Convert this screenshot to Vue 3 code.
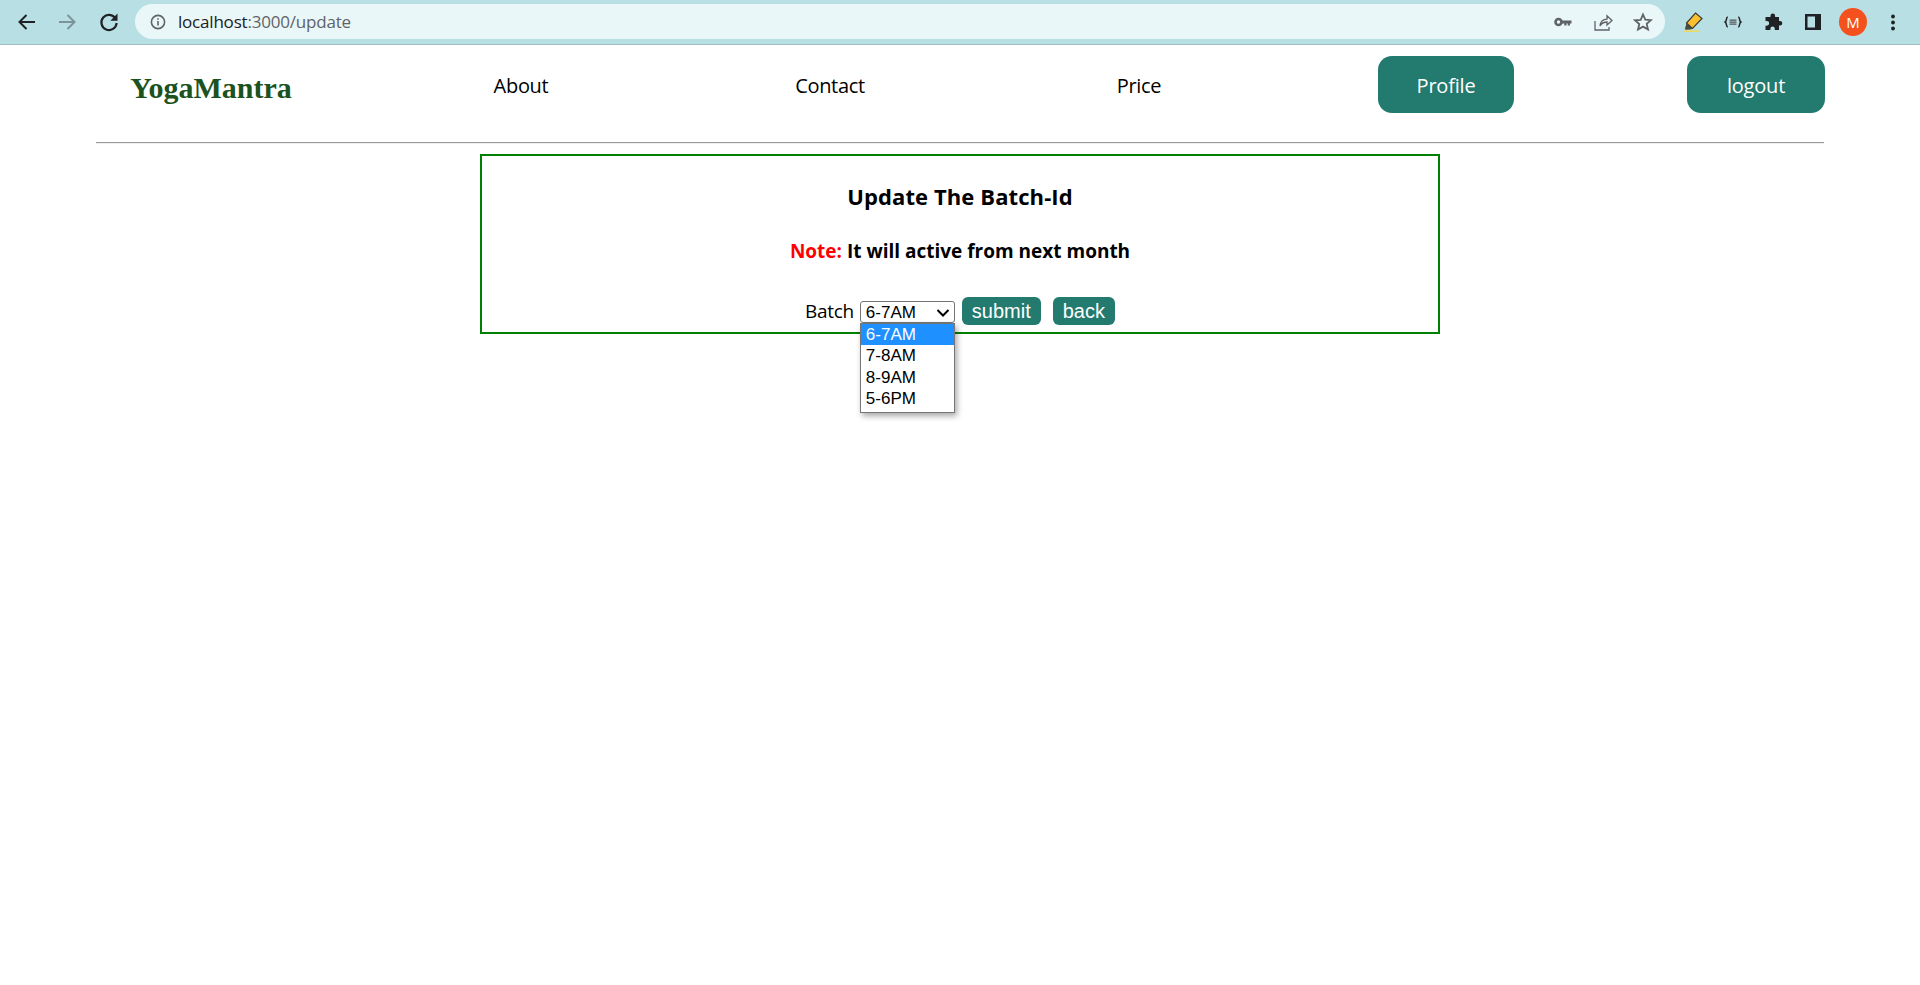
<script setup>
import { ref } from "vue";

const batches = ref(["6-7AM", "7-8AM", "8-9AM", "5-6PM"]);
const selected = ref("6-7AM");
const links = ["About", "Contact", "Price"];
</script>

<template>
  <div class="page">
    <header class="chrome">
      <div class="nav-icons">
        <svg width="24" height="24" viewBox="0 0 24 24"><path d="M20 12H5M11.5 5l-7 7 7 7" fill="none" stroke="#202124" stroke-width="2"/></svg>
        <svg width="24" height="24" viewBox="0 0 24 24"><path d="M4 12h15M12.5 5l7 7-7 7" fill="none" stroke="#7c9397" stroke-width="2"/></svg>
        <svg class="reload" width="24" height="24" viewBox="0 0 24 24"><path d="M18.5 8.500A7.600 7.600 0 1 0 19.600 13" fill="none" stroke="#202124" stroke-width="2.200"/><path d="M20.500 3.500v7.200h-7.200z" fill="#202124"/></svg>
      </div>
      <div class="omnibox">
        <svg class="info" width="16" height="16" viewBox="0 0 16 16"><circle cx="8" cy="8" r="6.600" fill="none" stroke="#5f6368" stroke-width="1.600"/><path d="M7.200 7h1.600v4.600H7.200zM7.200 4.200h1.600v1.600H7.200z" fill="#5f6368"/></svg>
        <span class="url">localhost<span class="url-dim">:3000/update</span></span>
        <div class="omni-right">
          <svg width="20" height="20" viewBox="0 0 20 20"><circle cx="5.500" cy="10" r="3" fill="none" stroke="#5f6368" stroke-width="2.600"/><path d="M8 8.400h10.500v3h-1.600v2h-2.200v-2h-1.200v2h-2.200v-2H8z" fill="#5f6368"/></svg>
          <svg width="20" height="20" viewBox="0 0 20 20"><path d="M2 9v9h14v-3M7 14c.4-4.400 3.500-6.600 7-6.800V3.800L19 8.500l-5 4.600V10c-3 0-5.400 1.200-7 4z" fill="none" stroke="#5f6368" stroke-width="1.300"/></svg>
          <svg width="20" height="20" viewBox="0 0 20 20"><path d="M10 2.500l2.300 5.200 5.600.5-4.200 3.700 1.300 5.500L10 14.600l-5 2.900 1.300-5.500-4.200-3.700 5.600-.5z" fill="none" stroke="#5f6368" stroke-width="1.800"/></svg>
        </div>
      </div>
      <div class="ext-icons">
        <svg width="20" height="20" viewBox="0 0 20 20">
          <path d="M12.500 1L19 6.500 9.500 16.500 3.500 11z" fill="#fbc02d" stroke="#3c3c3c" stroke-width="1.200"/>
          <path d="M3.500 11l6 5.500-2 1-5 .2-.5-1z" fill="#4a4a3a"/>
          <path d="M0 19.200h17" stroke="#f3d94e" stroke-width="1.400"/>
        </svg>
        <svg width="20" height="20" viewBox="0 0 20 20"><path d="M4.800 5C2.800 5 4 9 2.200 10c1.800 1 .6 5 2.600 5M15.200 5c2 0 .8 4 2.600 5-1.800 1-.6 5-2.600 5" fill="none" stroke="#202124" stroke-width="1.500"/><path d="M6.500 7.400h7v1.400h-7zM6.500 9.400h7v1.400h-7zM6.500 11.400h7v1.400h-7z" fill="#555"/></svg>
        <svg width="20" height="20" viewBox="0 0 20 20"><path d="M7.500 3.800a2.300 2.300 0 0 1 4.600 0V5H16v3.900h1a2.300 2.300 0 0 1 0 4.600h-1V18h-4.200v-1.200a2.200 2.200 0 0 0-4.400 0V18H2.500v-4.300h1.300a2.400 2.400 0 0 0 0-4.800H2.500V5h5z" fill="#202124"/></svg>
        <svg width="20" height="20" viewBox="0 0 20 20"><path d="M2 2h16v16H2z" fill="#202124"/><path d="M4.500 4.500h7.500v11H4.500z" fill="#b8e0e4"/></svg>
        <span class="avatar">M</span>
        <svg width="20" height="20" viewBox="0 0 20 20"><circle cx="10" cy="4.500" r="1.900" fill="#202124"/><circle cx="10" cy="10.500" r="1.900" fill="#202124"/><circle cx="10" cy="16.500" r="1.900" fill="#202124"/></svg>
      </div>
    </header>

    <nav class="navbar">
      <div class="brand">YogaMantra</div>
      <a v-for="link in links" :key="link" class="nav-link">{{ link }}</a>
      <button class="nav-btn profile">Profile</button>
      <button class="nav-btn logout">logout</button>
    </nav>
    <hr class="rule" />

    <main class="card">
      <h2 class="title">Update The Batch-Id</h2>
      <p class="note"><span class="note-label">Note:</span> It will active from next month</p>
      <form class="batch-form" @submit.prevent>
        <label class="batch-label">Batch</label>
        <div class="select-wrap">
          <select v-model="selected" class="batch-select">
            <option v-for="b in batches" :key="b">{{ b }}</option>
          </select>
          <svg class="chevron" width="14" height="8" viewBox="0 0 14 8"><path d="M1.500 1l5.500 5.500L12.500 1" fill="none" stroke="#000" stroke-width="2"/></svg>
          <ul class="dropdown">
            <li v-for="(b, i) in batches" :key="b" :class="{ active: i === 0 }">{{ b }}</li>
          </ul>
        </div>
        <button class="small-btn">submit</button>
        <button class="small-btn">back</button>
      </form>
    </main>
  </div>
</template>

<style>
body {
  background: #fff;
}
</style>

<style scoped>
.page {
  height: 985px;
  overflow: hidden;
  font-family: "Open Sans", sans-serif;
  color: #000;
}
.chrome {
  height: 44px;
  box-sizing: content-box;
  border-bottom: 1px solid #9cbfc4;
  background: #b8e0e4;
  display: flex;
  align-items: center;
}
.nav-icons {
  display: flex;
  gap: 16px;
  margin-left: 15px;
  width: 120px;
}
.reload {
  margin-left: 2px;
}
.omnibox {
  width: 1530px;
  height: 35px;
  margin-top: -1px;
  border-radius: 18px;
  background: #eaf7f8;
  display: flex;
  align-items: center;
  padding-left: 15px;
  box-sizing: border-box;
}
.info {
  margin-right: 12px;
}
.url {
  font-size: 17px;
  color: #202124;
  letter-spacing: -0.2px;
}
.url-dim {
  color: #5f6368;
}
.omni-right {
  margin-left: auto;
  display: flex;
  gap: 20px;
  padding-right: 12px;
}
.ext-icons {
  display: flex;
  align-items: center;
  gap: 20px;
  margin-left: 18px;
}
.avatar {
  width: 28px;
  height: 28px;
  margin: 0 -4px;
  border-radius: 50%;
  background: #f4511e;
  color: #fff;
  font-size: 15px;
  display: flex;
  align-items: center;
  justify-content: center;
}
.navbar {
  width: 1729px;
  height: 97px;
  margin-left: 96px;
  padding-left: 46px;
  box-sizing: border-box;
  display: grid;
  grid-template-columns: repeat(6, 138px);
  justify-content: space-between;
  justify-items: center;
  align-items: start;
}
.brand {
  margin-top: 26px;
  font-family: "Liberation Serif", serif;
  font-weight: 700;
  font-size: 30px;
  line-height: 34px;
  color: #1b5220;
  white-space: nowrap;
}
.nav-link {
  margin-top: 27px;
  padding-left: 2px;
  font-size: 20px;
  line-height: 28px;
  letter-spacing: -0.3px;
  color: #000;
}
.nav-btn {
  margin-top: 11px;
  height: 57px;
  padding: 2px 0 0;
  border: 0;
  border-radius: 14px;
  background: #237a6e;
  color: #fff;
  font-family: "Open Sans", sans-serif;
  font-size: 20px;
  letter-spacing: -0.2px;
}
.profile {
  width: 136px;
  margin-right: 2px;
}
.logout {
  width: 138px;
}
.rule {
  width: 1728px;
  height: 0;
  margin: 0 0 0 96px;
  border: 0;
  border-top: 1px solid #9a9a9a;
  border-bottom: 1px solid #eeeeee;
}
.card {
  width: 960px;
  height: 180px;
  margin: 10px 0 0 480px;
  box-sizing: border-box;
  border: 2px solid #008000;
  display: flex;
  flex-direction: column;
  align-items: center;
}
.title {
  margin: 25px 0 0;
  font-size: 22px;
  line-height: 30px;
  letter-spacing: 0.1px;
  font-weight: 700;
}
.note {
  margin: 27px 0 0;
  font-size: 19px;
  line-height: 27px;
  font-weight: 700;
}
.note-label {
  color: #ff0000;
}
.batch-form {
  margin-top: 32px;
  display: flex;
  align-items: flex-start;
}
.batch-label {
  font-size: 19px;
  line-height: 28px;
  letter-spacing: -0.3px;
  margin-right: 6px;
}
.select-wrap {
  position: relative;
  margin: 4px 7px 0 0;
}
.batch-select {
  display: block;
  appearance: none;
  width: 95px;
  height: 22px;
  padding: 0 0 0 5px;
  font-family: "Liberation Sans", sans-serif;
  font-size: 17px;
  background: #fff;
  color: #000;
  border: 1px solid #767676;
  border-radius: 3px;
}
.chevron {
  position: absolute;
  left: 76px;
  top: 8px;
  pointer-events: none;
}
.dropdown {
  position: absolute;
  left: 0;
  top: 22px;
  width: 95px;
  height: 90px;
  margin: 0;
  padding: 0;
  box-sizing: border-box;
  list-style: none;
  background: #fff;
  border: 1px solid #767676;
  box-shadow: 2px 3px 6px rgba(0, 0, 0, 0.35);
  font-family: "Liberation Sans", sans-serif;
  font-size: 17px;
  z-index: 2;
}
.dropdown li {
  height: 21.300px;
  line-height: 21.300px;
  padding-left: 5px;
  color: #000;
}
.dropdown li.active {
  background: #1e90ff;
  color: #fff;
}
.small-btn {
  height: 28px;
  padding: 0 10px;
  margin-right: 12px;
  border: 0;
  border-radius: 6px;
  background: #237a6e;
  color: #fff;
  font-family: "Liberation Sans", sans-serif;
  font-size: 20px;
}
.small-btn:last-child {
  margin-right: 0;
}
</style>
